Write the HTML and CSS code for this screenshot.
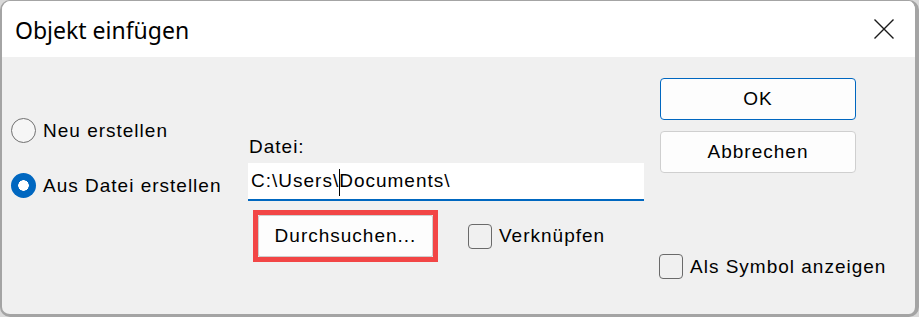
FILE: index.html
```html
<!DOCTYPE html>
<html lang="de">
<head>
    <meta charset="UTF-8">
    <title>Objekt einfügen</title>
    <link rel="stylesheet" href="styles.css">
</head>
<body>
    <div class="window">
        <div class="titlebar">
            <span class="title">Objekt einfügen</span>
            <svg class="close" width="20" height="20" viewBox="0 0 20 20">
                <path d="M0.5 0.5 L19.5 19.5 M19.5 0.5 L0.5 19.5" stroke="#1a1a1a" stroke-width="1.4" fill="none"/>
            </svg>
        </div>
        <div class="content">
            <div class="col-left">
                <div class="option">
                    <span class="radio"></span>
                    <span class="label">Neu erstellen</span>
                </div>
                <div class="option">
                    <span class="radio checked"></span>
                    <span class="label">Aus Datei erstellen</span>
                </div>
            </div>
            <div class="col-mid">
                <div class="field-label">Datei:</div>
                <div class="textbox">
                    <span>C:\Users\</span><span class="caret"></span><span>Documents\</span>
                </div>
                <div class="row">
                    <div class="highlight">
                        <div class="btn browse">Durchsuchen...</div>
                    </div>
                    <div class="check">
                        <span class="box"></span>
                        <span class="label">Verknüpfen</span>
                    </div>
                </div>
            </div>
            <div class="col-right">
                <div class="btn default">OK</div>
                <div class="btn">Abbrechen</div>
                <div class="check symbol">
                    <span class="box"></span>
                    <span class="label">Als Symbol anzeigen</span>
                </div>
            </div>
        </div>
    </div>
</body>
</html>
```

FILE: styles.css
```css
html, body {
    margin: 0;
    padding: 0;
}

body {
    background-color: #d9d9d9;
    font-family: "Liberation Sans", Arial, sans-serif;
    font-size: 19px;
    letter-spacing: 1px;
    color: #000;
}

.window {
    width: 919px;
    height: 317px;
    box-sizing: border-box;
    border-style: solid;
    border-color: #a4a4a4;
    border-width: 1px 4px 3px 2px;
    border-radius: 10px;
    overflow: hidden;
    background-color: #f0f0f0;
    display: flex;
    flex-direction: column;
}

.titlebar {
    height: 56px;
    box-sizing: border-box;
    padding: 2px 21px 0 13px;
    background-color: #fff;
    display: flex;
    justify-content: space-between;
    align-items: center;
}

.title {
    font-family: "Noto Sans", "Open Sans", sans-serif;
    font-size: 23px;
    letter-spacing: 0;
    line-height: 30px;
}

.close {
    margin-top: -3px;
}

.content {
    flex: 1;
    display: flex;
    align-items: flex-start;
    line-height: 20px;
}

/* left column: radio buttons */
.col-left {
    width: 237px;
    padding: 61px 0 0 9px;
    display: flex;
    flex-direction: column;
    gap: 30px;
}

.option {
    display: flex;
    align-items: center;
    height: 25px;
}

.radio {
    width: 23px;
    height: 23px;
    border: 1px solid #707070;
    border-radius: 50%;
    background-color: #f6f6f6;
    margin-right: 7px;
    flex-shrink: 0;
}

.radio.checked {
    width: 25px;
    height: 25px;
    border: none;
    background: radial-gradient(circle, #fff 0 5px, #0067c0 5.5px);
}

/* middle column */
.col-mid {
    width: 412px;
    padding-top: 80px;
}

.field-label {
    padding-left: 1px;
}

.textbox {
    margin-top: 6px;
    width: 393px;
    height: 36px;
    box-sizing: content-box;
    background-color: #fff;
    border-bottom: 2px solid #0067c0;
    padding-left: 3px;
    display: flex;
    align-items: center;
    white-space: pre;
}

.caret {
    width: 1px;
    height: 27px;
    background-color: #000;
    margin-right: -1px;
    margin-top: 2px;
}

.row {
    display: flex;
    align-items: center;
    margin-top: 9px;
    margin-left: 5px;
}

.highlight {
    border: 5px solid #f24646;
}

.btn {
    height: 40px;
    width: 194px;
    box-sizing: content-box;
    border: 1px solid #cfcfcf;
    border-radius: 4px;
    background-color: #fdfdfd;
    display: flex;
    align-items: center;
    justify-content: center;
}

.btn.browse {
    width: 173px;
    border-radius: 2px;
}

.btn.default {
    border-color: #0067c0;
}

.check {
    display: flex;
    align-items: center;
    white-space: nowrap;
}

.row .check {
    margin-left: 30px;
}

.box {
    width: 22px;
    height: 23px;
    border: 1px solid #6a6a6a;
    border-radius: 4px;
    margin-right: 7px;
    flex-shrink: 0;
}

/* right column: dialog buttons */
.col-right {
    width: 196px;
    padding-top: 21px;
    display: flex;
    flex-direction: column;
    gap: 11px;
}

.check.symbol {
    margin-top: 70px;
    margin-left: -1px;
}
```
